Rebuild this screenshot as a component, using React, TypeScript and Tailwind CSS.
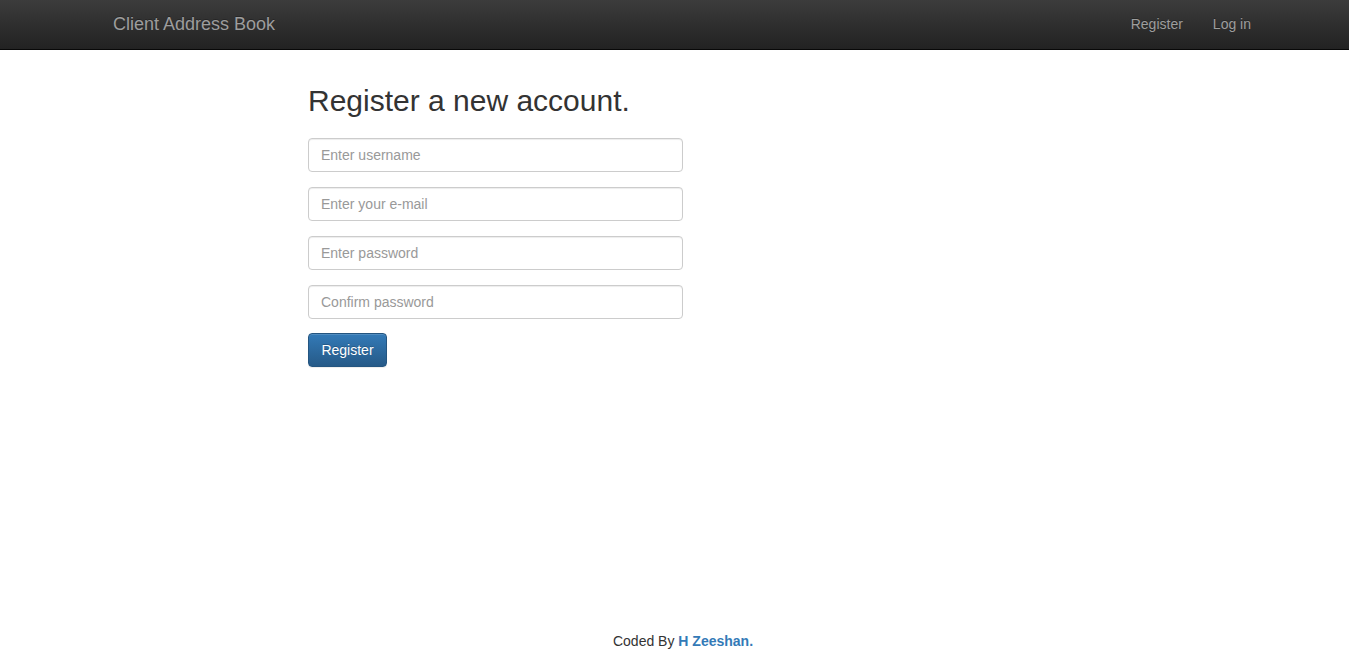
export default function App() {
  const fields = ["Enter username", "Enter your e-mail", "Enter password", "Confirm password"];

  return (
    <div className="min-h-[658px] overflow-hidden bg-white font-['Liberation_Sans',Arial,sans-serif] text-[14px] text-[#333]">
      <div className="w-[1366px]">
        {/* navbar */}
        <nav className="h-[50px] border-b border-[#080808] bg-gradient-to-b from-[#3c3c3c] to-[#222]">
          <div className="ml-[98px] flex w-[1168px] items-center justify-between">
            <a className="px-[15px] pt-[14px] pb-[15px] text-[18px] leading-[20px] text-[#9d9d9d] [text-shadow:0_-1px_0_rgba(0,0,0,0.25)]">
              Client Address Book
            </a>
            <ul className="flex">
              <li>
                <a className="block px-[15px] pt-[14px] pb-[15px] leading-[20px] text-[#9d9d9d] [text-shadow:0_-1px_0_rgba(0,0,0,0.25)]">Register</a>
              </li>
              <li>
                <a className="block px-[15px] pt-[14px] pb-[15px] leading-[20px] text-[#9d9d9d] [text-shadow:0_-1px_0_rgba(0,0,0,0.25)]">Log in</a>
              </li>
            </ul>
          </div>
        </nav>

        {/* form */}
        <div className="ml-[308px] w-[375px] pt-[34px]">
          <h2 className="mb-[21px] text-[30px] leading-[33px] font-normal text-[#333]">Register a new account.</h2>
          <form className="flex flex-col">
            {fields.map((f) => (
              <input
                key={f}
                type={f.includes("password") ? "password" : "text"}
                placeholder={f}
                className="mb-[15px] h-[34px] w-full rounded-[4px] border border-[#ccc] px-[12px] py-[6px] text-[14px] text-[#555] shadow-[inset_0_1px_1px_rgba(0,0,0,0.075)] outline-none placeholder:text-[#999]"
              />
            ))}
            <button
              type="button"
              className="-mt-px h-[34px] w-[79px] rounded-[4px] border border-[#245580] bg-gradient-to-b from-[#337ab7] to-[#265a88] px-[12px] text-[14px] text-white shadow-[inset_0_1px_0_rgba(255,255,255,0.15),0_1px_1px_rgba(0,0,0,0.075)] [text-shadow:0_-1px_0_rgba(0,0,0,0.2)]"
            >
              Register
            </button>
          </form>
        </div>

        {/* footer */}
        <div className="mt-[264px] text-center leading-[20px]">
          Coded By <a className="font-bold text-[#337ab7]">H Zeeshan.</a>
        </div>
      </div>
    </div>
  );
}
